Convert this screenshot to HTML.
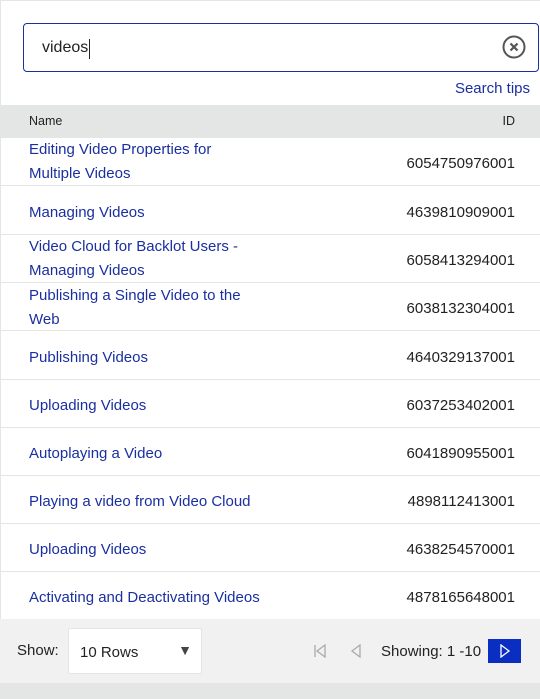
<!DOCTYPE html>
<html><head><style>
*{margin:0;padding:0;box-sizing:border-box}
body{width:540px;height:699px;background:#fff;font-family:"Liberation Sans",sans-serif;position:relative;overflow:hidden}
.frame{position:absolute;left:0;top:0;width:540px;height:699px;border-left:1px solid #e4e6e5;border-top:1px solid #e4e6e5}
.search{position:absolute;left:23px;top:23px;width:516px;height:49px;border:1px solid #1a2fa0;border-radius:4px}
.search span{position:absolute;left:18px;top:15px;font-size:16px;color:#222}
.search i{position:absolute;left:65px;top:15px;width:1px;height:20px;background:#222}
.tips{position:absolute;right:10px;top:80px;font-size:15px;color:#1a2fa0}
.hdr{position:absolute;left:0;top:105px;width:540px;height:33px;background:#e4e6e5;font-size:12.5px;color:#222}
.hdr .n{position:absolute;left:29px;top:9px}.hdr .d{position:absolute;right:25px;top:9px}
.row{position:absolute;left:0;width:540px;height:48px;border-bottom:1px solid #e4e6e5}
.row .n{position:absolute;left:29px;font-size:15px;color:#1a2fa0;line-height:24px}
.row .d{position:absolute;right:25px;top:17px;font-size:15px;color:#222}
.foot{position:absolute;left:0;top:619px;width:540px;height:64px;background:#f1f1f1}
.bot{position:absolute;left:0;top:683px;width:540px;height:16px;background:#e4e6e5}
.sel{position:absolute;left:68px;top:628px;width:134px;height:46px;background:#fff;border:1px solid #e4e4e4;border-radius:2px}
</style></head><body>
<div class="frame"></div>
<div class="search"><span>videos</span><i></i>
<svg style="position:absolute;right:12px;top:11px" width="24" height="24" viewBox="0 0 24 24"><circle cx="12" cy="12" r="10.5" fill="none" stroke="#555" stroke-width="2"/><path d="M8.5 8.5L15.5 15.5M15.5 8.5L8.5 15.5" stroke="#555" stroke-width="2.2"/></svg></div>
<div class="tips">Search tips</div>
<div class="hdr"><span class="n">Name</span><span class="d">ID</span></div>
<div class="row" style="top:138px"><span class="n" style="top:0">Editing Video Properties for<br>Multiple Videos</span><span class="d">6054750976001</span></div>
<div class="row" style="top:187px"><span class="n" style="top:14px">Managing Videos</span><span class="d">4639810909001</span></div>
<div class="row" style="top:235px"><span class="n" style="top:0">Video Cloud for Backlot Users -<br>Managing Videos</span><span class="d">6058413294001</span></div>
<div class="row" style="top:283px"><span class="n" style="top:1px">Publishing a Single Video to the<br>Web</span><span class="d">6038132304001</span></div>
<div class="row" style="top:332px"><span class="n" style="top:14px">Publishing Videos</span><span class="d">4640329137001</span></div>
<div class="row" style="top:380px"><span class="n" style="top:14px">Uploading Videos</span><span class="d">6037253402001</span></div>
<div class="row" style="top:428px"><span class="n" style="top:14px">Autoplaying a Video</span><span class="d">6041890955001</span></div>
<div class="row" style="top:476px"><span class="n" style="top:14px">Playing a video from Video Cloud</span><span class="d">4898112413001</span></div>
<div class="row" style="top:524px"><span class="n" style="top:14px">Uploading Videos</span><span class="d">4638254570001</span></div>
<div class="row" style="top:572px;border:none"><span class="n" style="top:14px">Activating and Deactivating Videos</span><span class="d">4878165648001</span></div>
<div class="foot"></div>
<div class="bot"></div>
<div style="position:absolute;left:17px;top:642px;font-size:15px;color:#222">Show:</div>
<div class="sel"><span style="position:absolute;left:11px;top:15px;font-size:15px;color:#222">10 Rows</span><span style="position:absolute;right:9px;top:13px;font-size:14px;color:#444">▼</span></div>
<svg style="position:absolute;left:313px;top:644px" width="14" height="14" viewBox="0 0 14 14"><path d="M2 1V13M12 1L4 7L12 13Z" fill="none" stroke="#aaa" stroke-width="1.3"/></svg>
<svg style="position:absolute;left:349px;top:644px" width="14" height="14" viewBox="0 0 14 14"><path d="M11 1L3 7L11 13Z" fill="none" stroke="#aaa" stroke-width="1.3"/></svg>
<div style="position:absolute;left:381px;top:643px;font-size:15px;color:#222">Showing: 1 -10</div>
<div style="position:absolute;left:488px;top:639px;width:33px;height:24px;background:#0a2ec2"><svg style="position:absolute;left:10px;top:5px" width="14" height="14" viewBox="0 0 14 14"><path d="M3 1L11 7L3 13Z" fill="none" stroke="#fff" stroke-width="1.3"/></svg></div>
</body></html>
